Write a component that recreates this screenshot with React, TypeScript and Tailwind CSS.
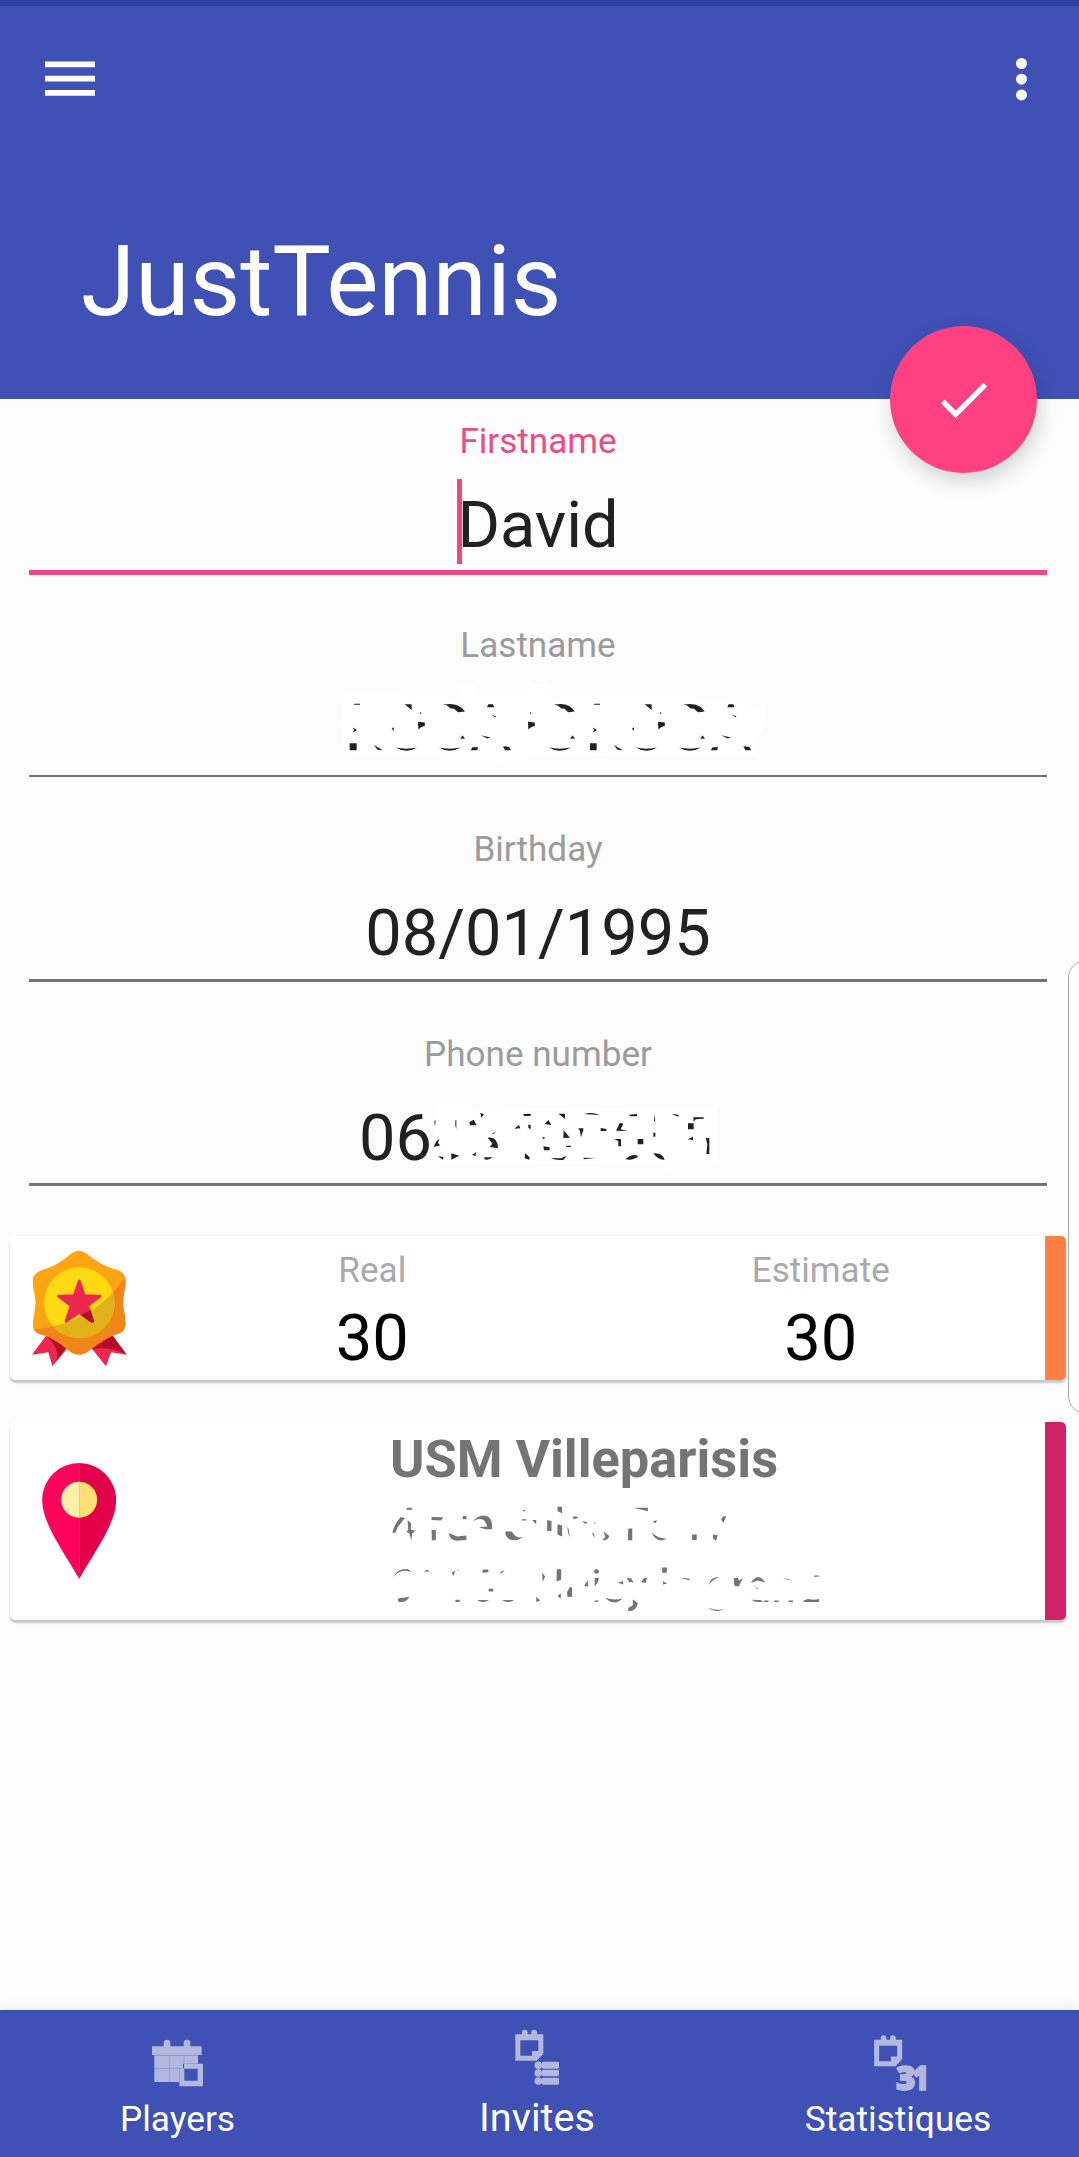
import type { ReactNode } from 'react';

function Field({ label, active, children }: { label: string; active?: boolean; children: ReactNode }) {
  return (
    <div className="h-[204.4px] pt-[21.7px] text-center">
      <div className={`h-10 text-[35.1px] leading-10 ${active ? 'text-[#ea4c84]' : 'text-[#9b9b9b]'}`}>{label}</div>
      <div className="mt-[27px] flex h-[75px] justify-center text-[64.9px] leading-[75px] text-[#212121]">{children}</div>
      <div className={active ? 'mt-[7.8px] h-[5px] bg-[#ef4781]' : 'mt-[7.6px] h-[2.5px] bg-[#757575]'} />
    </div>
  );
}

function Rank({ label, value }: { label: string; value: string }) {
  return (
    <div className="flex flex-1 flex-col items-center pt-[13.5px]">
      <div className="text-[35.1px] leading-10 text-[#a9a9a9]">{label}</div>
      <div className="mt-[11px] text-[65px] leading-[75px] text-black">{value}</div>
    </div>
  );
}

function ScribbledName() {
  return (
    <svg className="mt-[-13px] h-[87px] w-[430px] shrink-0 overflow-visible" viewBox="69 840 1290 260">
      <path fill="#fff" d="M135 885L290 880L345 895L390 885L480 900L470 850Q520 845 540 885L680 890Q690 850 720 855Q760 860 755 895L860 885L1000 890L1150 885L1240 900L1395 925L1395 960L1360 1075L1100 1080L900 1070L600 1085L200 1075L135 1060L120 970Z" />
      <path fill="#212121" d="M162 914h18v3h-18zM158 985l13 8-13 7 4-7zM149 1032h21v21h-21zM222 1037l12 8 15 8-17-1zM287 1045q32 7 64 0q-30 20-64 0zM314 915h21v18l-8-7zM354 968l20 2 1 10-12 4-8 7zM360 938l5 6h-5zM275 988l6-4v12zM430 916q47-8 65 21l-21 2-12-10-10-1-12-10zM417 1045q32 7 65 0q-34 20-65 0zM480 1018l8-9 7 10zM565 915h14l4 9h-22zM575 947l13 4-2 4zM542 1008l30 7-10 3zM517 1044h18l-4 9h-19zM609 1041l18 2 6 10h-18zM684 968l20 2 1 10-12 4-8 7zM690 938l5 6h-5zM762 916q47-8 62 21l-20 2-10-10-10-1-10-8zM747 1045q32 7 66 0q-34 20-66 0zM810 1018l8-9 7 10zM882 914h18v3h-18zM878 985l13 8-13 7 4-7zM870 1032h20v21h-20zM942 1037l12 8 15 8-17-1zM1007 1045q32 7 64 0q-30 20-64 0zM1034 915h21v18l-8-7zM1074 968l20 2 1 10-12 4-8 7zM1080 938l5 6h-5zM996 988l6-4v12zM1151 916q47-8 63 21l-20 2-12-10-10-1-12-10zM1137 1045q32 7 66 0q-34 20-66 0zM1200 1018l8-9 7 10zM1286 915h14l4 9h-22zM1296 947l13 4-2 4zM1263 1008l30 7-10 3zM1238 1044h17l-4 9h-19zM1330 1041l18 2 6 10h-18z" />
    </svg>
  );
}

function ScribbledDigits() {
  return (
    <svg className="h-[75px] w-[285px] shrink-0 overflow-visible" viewBox="335 905 855 225">
      <path fill="#fff" d="M350 915L450 915L480 940L560 930L690 925L800 930L1040 920L1060 925L1190 920L1190 1085L1060 1085L1045 1120L1030 1090L650 1095L380 1095L340 1075Z" />
      <path fill="#212121" d="M342 965l4-2-2 20zM405 963h3v26l-3-10zM357 1018l-4 14 7 6-20 5q5-17 17-25zM352 1071l17 2-1 8zM393 1062l24 7-24 12zM447 969l13-8 9 17h-20zM480 940l11 5-8 10zM455 1067l13-9-3 12zM502 1015q30-5 31 32l-25-4 8-10zM492 1074h25q-12 10-25 6zM515 1003l12-7-9 9zM582 988l14-11 4 10zM608 944l22-1 2 7h-20zM624 976h7v14l-7-4zM614 1062l14 12-1 7-14-4zM673 974l11-12 9 15zM714 943h20v15zM730 993l19 22-20 1zM666 1012l9 3-7 5zM669 1041l19 3v9h-17zM737 1039h15v4h-15zM692 1076l30 1 18-8-10 12q-20 4-38-5zM791 944q25-8 48 4-30-3-48-4zM774 987h15v6l-7 21-3-18zM790 1075l34 1-34 4zM841 986l17 3v6h-17zM899 970l10 3-8 17 20 5-34-1zM882 1019h20v22h-8v-15zM925 946l25-2v7h-20zM952 1019h17v16h-17zM915 1080q20-20 39-10-15 15-39 10zM1003 943l2 27-4-8zM999 1000h6v12h-6zM999 1062q27-2 34 19-20 2-34-19zM1054 944l20 2 1 6-15-5zM1103 972h17v18h-17zM1119 954h31v4l-24 2-6 7zM1102 1020l16-8v10zM1156 1015l11 2v47h-9l3-29z" />
    </svg>
  );
}

function ScribbledAddress() {
  return (
    <svg className="mt-[13px] h-[113px] w-[440px]" viewBox="60 280 1320 340">
      <path fill="#747474" d="M110 294h13l3 6h-20zM90 322l13 3-22 28-6 16-10 1q5-25 25-48zM111 332l10 8v20l14 4-10 8-3 20-6-21-9-4 6-6zM183 322l35 1-6 10-29-2zM183 361h13v31h-12zM277 319h11v10h-11zM235 370l25 11 28-3v13l-20 2q-30 3-33-23zM307 335q16-18 38-17 23 4 20 41h-21l-18-6 24-2q-6-35-43-16zM405 366h20q13 25 36 15-20 16-42 9-15-8-14-24zM458 302l11-3-10 8zM455 329h14v4h-14zM486 331h12v14zM531 331l13 3v30h-13zM562 291h14v20l-14-6zM562 344l14 4v33l-14-6zM592 352l4 8 3 23q-8-15-7-31zM608 322q10-5 17 3l-15 4zM635 333l17 6-6 4zM665 368l8 5v12zM672 339h4v3h-4zM700 365l18 14q-5 15-22 13l10-10zM790 294h44v11zM775 357h12v35h-13zM846 337l15-6-3 9zM845 369q26 22 47 17-30 19-47-17zM967 375h14v16h-14zM1061 320h9l-9 20-7-11zM1030 375l14 2-5 17-9-8zM69 505q7-28 44-26l10 9q-38-13-54 17zM160 486l10-6 7 7zM82 567l35-5q-12 20-34 15zM244 489l11-5-7 16zM260 481h9l-8 2zM255 571h13v7h-13zM337 480h17v8l-18 2zM319 572h37q-18 12-37 0zM355 538h14v8h-14zM388 490l16-10-9 11zM395 572h37q-18 12-37 0zM516 489l9 13-8 15zM498 563l12 10-12 5zM560 479h13v32l-14 5zM562 560l10-9v17zM591 548q8-20 15-14v28l-14 1zM642 530l11-18 2 19zM671 486q8-15 17 0-8 14-17 0zM674 506h13l-5 15-8 10zM673 573h13v4h-13zM706 565q26 9 52 2-27 25-52-2zM744 520l15-5 1 10zM770 505l14 2 7 12-14-1zM822 506h9l-3 15-14-3zM789 570l15 12q-6 25-29 24v-10l14-8zM877 474h14v16h-14zM879 515l13 7-12 3zM930 505l27 2 4 6zM1018 525q5-24 31-21-20 5-30 21zM1015 595q27 10 50 3-28 15-50-3zM1093 506h13l2 8 13-9-14 26-13-2zM1144 521q22-35 43-2l-23-6zM1157 535h10l-5 4zM1145 571l27 1 10 4q-22 6-37-5zM1184 573h13v5h-13zM1214 573h14v5h-14zM1240 504l24 7-7 1zM1257 573h14v5h-14zM1334 498h14v4h-14zM1300 575l15-6 20 2 14-2v9h-45z" />
    </svg>
  );
}

function Medal() {
  return (
    <svg className="h-[118.33px] w-[98.33px]" viewBox="90 85 295 355">
      <path fill="#ee274f" d="M140 342L96 402L145 395L157 437L205 380ZM336 342L380 402L333 395L318 437L272 380Z" />
      <path fill="#b40d26" d="M138 345L200 380L169 422Q180 380 138 345ZM338 345L379 400Q325 376 276 386Z" />
      <clipPath id="medal-edge">
        <path d="M212 100Q237 80 262 100Q300 134 350 147Q378 155 377 183Q376 200 371 225Q368 245 371 265Q377 295 376 315Q374 333 350 341Q310 352 270 388Q237 416 204 388Q165 352 122 341Q98 333 98 312Q100 290 105 262Q108 245 105 228Q98 200 98 182Q98 158 125 149Q175 134 212 100Z" />
      </clipPath>
      <g clipPath="url(#medal-edge)">
        <path fill="#ffa412" d="M90 80H385V410H90Z" />
        <path fill="#f28518" d="M378 165Q285 308 98 327V410H390V165Z" />
        <circle cx="238" cy="246" r="106" fill="#ffda13" />
        <clipPath id="medal-disc"><circle cx="238" cy="246" r="106" /></clipPath>
        <path clipPath="url(#medal-disc)" fill="#e2b01a" d="M378 165Q285 308 98 327V410H390V165Z" />
      </g>
      <path fill="#ee274f" stroke="#ee274f" strokeWidth="8" strokeLinejoin="round" d="M238 181L253 225L301 226L263 255L278 302L238 275L198 302L213 255L175 226L222 225Z" />
      <path fill="#b40d26" d="M242 284L272 268L282 302Q280 308 272 305Z" />
    </svg>
  );
}

function MapPin() {
  return (
    <svg className="h-[116px] w-[74.33px]" viewBox="126.5 158 223 348">
      <path fill="#ff025b" d="M238 158A111 111 0 0 0 127 269C127 340 190 420 238 506Z" />
      <path fill="#e3004a" d="M238 158A111 111 0 0 1 349 269C349 340 286 420 238 506Z" />
      <path fill="#ffefaa" d="M238 214A54 54 0 0 0 238 322Z" />
      <path fill="#ffdf71" d="M238 214A54 54 0 0 1 238 322Z" />
    </svg>
  );
}

function PlayersIcon() {
  return (
    <svg className="mb-[11.7px] h-[48px] w-[52px]" viewBox="186 119 156 144" fill="#b2b8e0">
      <path d="M186 141H221V127Q222 121 231 121Q240 121 241 127V141H281V127Q282 121 291 121Q300 121 301 127V141H335V167H186Z" />
      <path d="M193 168H324V193H279V207H268V248H193Z" />
      <path fillRule="evenodd" d="M282 193H339V261H268V207H282ZM283 208V244H323V208Z" />
      <path fill="none" stroke="#8f98d1" strokeWidth="2.5" d="M193 207H270M238 168V248M282 168V193M193 168H324" />
    </svg>
  );
}

function SmallCalendar() {
  return (
    <path fillRule="evenodd" d="M198 104H218V96Q219 90 226 90Q233 90 235 96V104H246V96Q247 90 254 90Q261 90 263 96V104H282V162L262 183H198ZM213 122V168H248V154H267V122Z" />
  );
}

function InvitesIcon() {
  return (
    <svg className="mb-[12.4px] h-[56px] w-[45px]" viewBox="197 88 135 168" fill="#b2b8e0">
      <SmallCalendar />
      <circle cx="267" cy="197" r="11.5" />
      <circle cx="267" cy="220" r="11.5" />
      <circle cx="267" cy="244" r="11.5" />
      <rect x="278" y="186" width="51" height="21" rx="4" />
      <rect x="278" y="210" width="51" height="20" rx="4" />
      <rect x="278" y="234" width="51" height="21" rx="4" />
    </svg>
  );
}

function StatsIcon() {
  return (
    <svg className="mb-[8.3px] h-[56px] w-[58px] overflow-visible" viewBox="268 104 174 168" fill="#b2b8e0">
      <g transform="translate(85.5 14.5)"><SmallCalendar /></g>
      <g fontFamily="Open Sans, sans-serif" fontSize="100" fontWeight="800" stroke="#b2b8e0" strokeWidth="5">
        <text x="349" y="269">3</text>
        <text x="398" y="269" textLength="50" lengthAdjust="spacingAndGlyphs">1</text>
      </g>
    </svg>
  );
}

export default function App() {
  return (
    <div className="relative flex h-[2157px] w-[1079px] flex-col overflow-hidden bg-[#fcfcfc] font-['Roboto',sans-serif]">
      <header className="relative h-[399px] shrink-0 border-t-[6px] border-[#303f9f] bg-[#3f51b5] text-white">
        <div className="flex justify-between pt-[52px] pr-[52px] pl-[45px]">
          <svg className="mt-[3px] h-[36px] w-[50px]" viewBox="0 0 50 36" fill="white">
            <path d="M0 .5H50V6.3H0ZM0 14.7H50V20.5H0ZM0 29H50V34.8H0Z" />
          </svg>
          <svg className="h-[43px] w-[11px]" viewBox="0 0 11 43" fill="white">
            <circle cx="5.5" cy="5.5" r="5.5" />
            <circle cx="5.5" cy="21.2" r="5.5" />
            <circle cx="5.5" cy="36.9" r="5.5" />
          </svg>
        </div>
        <h1 className="mt-[121px] pl-[81px] text-[98.3px] leading-[120px]">JustTennis</h1>
        <button className="absolute top-[320px] left-[890px] z-10 flex size-[147px] items-center justify-center rounded-full bg-[#ff4081] shadow-[3px_8px_20px_rgba(0,0,0,0.17)]">
          <svg className="size-[63px]" viewBox="0 0 24 24" fill="white">
            <path d="M9 16.2L4.8 12l-1.4 1.4L9 19 21 7l-1.4-1.4L9 16.2z" />
          </svg>
        </button>
      </header>

      <main className="flex-1">
        <div className="mr-8 ml-[29px]">
          <Field label="Firstname" active>
            <span className="relative">
              David
              <span className="absolute top-[-8.5px] left-0 h-[85px] w-[5px] bg-[#ef4781]" />
            </span>
          </Field>
          <Field label="Lastname"><ScribbledName /></Field>
          <Field label="Birthday">08/01/1995</Field>
          <Field label="Phone number">06<ScribbledDigits /></Field>
        </div>

        <section className="mt-[19.5px] mr-[13px] ml-[10px] flex h-[144px] rounded-[5px] bg-white shadow-[0_3px_2px_#c8c8c8,0_0_1px_#e6e6e6]">
          <div className="flex w-[138px] items-center justify-center"><Medal /></div>
          <Rank label="Real" value="30" />
          <Rank label="Estimate" value="30" />
          <div className="w-[21px] rounded-r-[5px] bg-[#ff7f44]" />
        </section>

        <section className="mt-[42px] mr-[13px] ml-[10px] flex h-[198px] rounded-[5px] bg-white shadow-[0_3px_2px_#c8c8c8,0_0_1px_#e6e6e6]">
          <div className="flex w-[138px] items-center justify-center"><MapPin /></div>
          <div className="flex-1 pt-[6px] pl-[242px]">
            <div className="text-[52.4px] leading-[62px] font-bold text-[#747474]">USM Villeparisis</div>
            <ScribbledAddress />
          </div>
          <div className="w-[21px] rounded-r-[5px] bg-[#d12268]" />
        </section>
      </main>

      <nav className="flex h-[147px] shrink-0 bg-[#3f51b5] text-[35.3px] leading-10 text-white shadow-[0_-1px_14px_rgba(0,0,0,0.08)]">
        <a className="flex w-[355px] flex-col items-center justify-end pb-[18px]"><PlayersIcon />Players</a>
        <a className="flex w-[364px] flex-col items-center justify-end pb-[19.3px] text-[39.6px]"><InvitesIcon />Invites</a>
        <a className="flex w-[358px] flex-col items-center justify-end pb-[18px]"><StatsIcon />Statistiques</a>
      </nav>

      <div className="absolute top-[960px] left-[1068px] h-[454px] w-[40px] rounded-[18px] border-[1.5px] border-[#a8a8a8] bg-[#fdfdfd]" />
    </div>
  );
}
